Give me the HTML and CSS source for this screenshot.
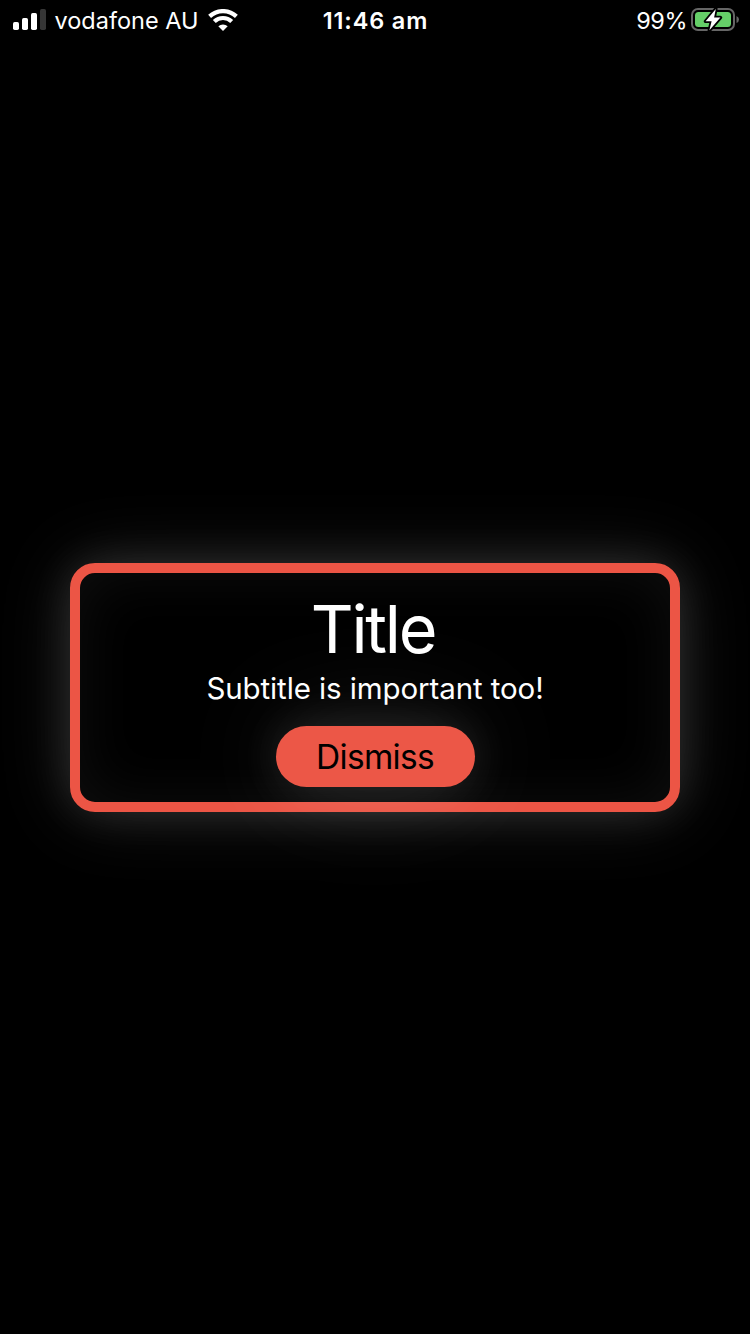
FILE: index.html
```html
<!DOCTYPE html>
<html lang="en">
<head>
<meta charset="utf-8">
<title>Alert</title>
<link rel="stylesheet" href="styles.css">
</head>
<body>
<div class="screen">
  <header class="status">
    <div class="status-left">
      <svg class="signal" width="33" height="22" viewBox="0 0 33 22">
        <rect x="0" y="13" width="6" height="8" rx="1.7" fill="#fff"/>
        <rect x="9" y="9" width="6" height="12" rx="1.7" fill="#fff"/>
        <rect x="18" y="4" width="6" height="17" rx="1.7" fill="#fff"/>
        <rect x="27" y="0" width="6" height="21" rx="1.7" fill="#363636"/>
      </svg>
      <span class="carrier">vodafone AU</span>
      <svg class="wifi" width="30" height="22" viewBox="0 0 30 22">
        <g fill="none" stroke="#fff" stroke-width="4.2">
          <path d="M1.6 7.4 A19.5 19.5 0 0 1 28.4 7.4"/>
          <path d="M6.3 12.5 A12.5 12.5 0 0 1 23.7 12.5"/>
        </g>
        <path fill="#fff" d="M10.3 17.3 A7.2 7.2 0 0 1 19.7 17.3 L15 22 Z"/>
      </svg>
    </div>
    <span class="time">11:46 am</span>
    <div class="status-right">
      <span class="percent">99%</span>
      <svg class="battery" width="49" height="26" viewBox="0 0 49 26">
        <rect x="1" y="3" width="42" height="21" rx="6" fill="none" stroke="#666" stroke-width="2"/>
        <path fill="#666" d="M45.5 10 Q48 11 48 13.5 Q48 16 45.5 17 Z"/>
        <rect x="4" y="6" width="36" height="15" rx="3.5" fill="#65cf68"/>
        <path d="M24.8 3 L14.6 15.3 H20.6 L18.4 24.2 L29.4 11.6 H23.1 Z" fill="#fff" stroke="#000" stroke-width="3.6" paint-order="stroke" stroke-linejoin="round"/>
      </svg>
    </div>
  </header>
  <main class="stage">
    <section class="card">
      <h1 class="title">Title</h1>
      <p class="subtitle">Subtitle is important too!</p>
      <button class="dismiss">Dismiss</button>
    </section>
  </main>
</div>
</body>
</html>
```
FILE: styles.css
```css
* {
  box-sizing: border-box;
}

body {
  margin: 0;
  background: #000;
  color: #fff;
  font-family: Inter, "Liberation Sans", sans-serif;
}

.screen {
  display: flex;
  flex-direction: column;
  width: 750px;
  height: 1334px;
  overflow: hidden;
}

.status {
  display: grid;
  grid-template-columns: 1fr auto 1fr;
  align-items: center;
  height: 40px;
  padding: 0 10px 0 13px;
  font-size: 23.5px;
  line-height: 40px;
  white-space: nowrap;
}

.status-left,
.status-right {
  display: flex;
  align-items: center;
}

.status-right {
  justify-content: flex-end;
  gap: 4px;
}

.signal,
.wifi {
  margin-top: -1px;
}

.carrier {
  margin: 1px 10px 0 8.5px;
  letter-spacing: 0;
}

.time {
  padding-top: 1px;
  margin-right: 2px;
  font-weight: 600;
  letter-spacing: 0.85px;
}

.percent {
  padding-top: 1px;
  letter-spacing: -0.5px;
}

.battery {
  margin-top: -3px;
}

.stage {
  display: flex;
  flex: 1;
  align-items: center;
  justify-content: center;
}

.card {
  display: flex;
  flex-direction: column;
  align-items: center;
  width: 610px;
  height: 249px;
  padding: 16px 0 15px;
  border: 10px solid #ec5545;
  border-radius: 25px;
  box-shadow:
    0 0 45px rgba(255, 255, 255, 0.12),
    0 0 75px rgba(255, 255, 255, 0.13),
    inset 0 0 60px rgba(255, 255, 255, 0.06);
}

.title {
  margin: 0;
  padding-right: 4px;
  font-size: 66.5px;
  font-weight: 400;
  line-height: 81px;
  letter-spacing: -2.2px;
}

.subtitle {
  margin: 0;
  font-size: 29.5px;
  line-height: 36px;
  letter-spacing: -0.1px;
}

.dismiss {
  width: 199px;
  height: 61px;
  margin-top: 20px;
  padding: 1px 0 0;
  border: 0;
  border-radius: 31px;
  background: #ec5747;
  box-shadow:
    0 0 45px rgba(255, 255, 255, 0.13),
    0 0 110px rgba(255, 255, 255, 0.13);
  color: #000;
  font-family: inherit;
  font-size: 33.5px;
  line-height: 60px;
  letter-spacing: -0.7px;
}
```
